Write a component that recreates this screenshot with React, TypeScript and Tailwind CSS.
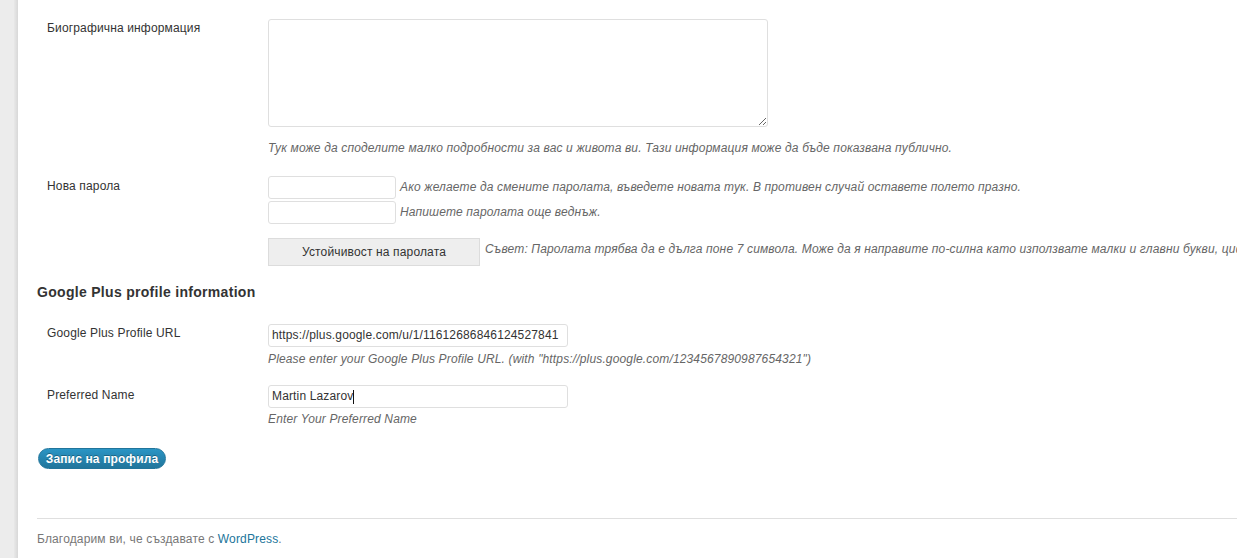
import React from "react";

const labelCls = "w-[231px] shrink-0 pl-[10px] leading-[18px] text-[#333]";
const descCls = "italic leading-[18px] text-[#666]";
const inputCls =
  "h-[23px] rounded-[3px] border border-[#dfdfdf] bg-white px-[3px] text-[12px] leading-[21px] text-[#333] outline-none";

export default function App() {
  return (
    <div className="flex h-[558px] w-[1237px] overflow-hidden bg-white font-['Liberation_Sans',Arial,sans-serif] text-[12px] tracking-[0.15px] text-[#333]">
      {/* admin menu edge */}
      <div className="flex w-[18px] shrink-0">
        <div className="w-[14px] bg-[#ececec]" />
        <div className="w-[4px] bg-linear-to-r from-[#e8e8e8] to-[#d8d8d8]" />
      </div>

      <div className="flex min-w-0 flex-1 flex-col pl-[19px]">
        {/* Bio */}
        <div className="mt-[19px] flex">
          <div className={labelCls}>Биографична информация</div>
          <div className="min-w-0">
            <textarea
              className="block h-[108px] w-[500px] rounded-[3px] border border-[#dfdfdf] bg-white outline-none"
              defaultValue=""
            />
            <p className={`mt-[12px] whitespace-nowrap ${descCls}`}>
              Тук може да споделите малко подробности за вас и живота ви. Тази информация може да бъде показвана публично.
            </p>
          </div>
        </div>

        {/* Password */}
        <div className="mt-[19px] flex">
          <div className={`${labelCls} pt-[1px]`}>Нова парола</div>
          <div className="min-w-0">
            <div className="flex items-center gap-[4px]">
              <div className={`${inputCls} w-[128px]`} />
              <span className={`-mt-[1px] whitespace-nowrap ${descCls}`}>
                Ако желаете да смените паролата, въведете новата тук. В противен случай оставете полето празно.
              </span>
            </div>
            <div className="mt-[2px] flex items-center gap-[4px]">
              <div className={`${inputCls} w-[128px]`} />
              <span className={`-mt-[1px] whitespace-nowrap ${descCls}`}>Напишете паролата още веднъж.</span>
            </div>
            <div className="mt-[14px] flex items-start">
              <div className="flex h-[28px] w-[212px] shrink-0 items-center justify-center border border-[#dcdcdc] bg-[#eeeeee] text-[12px] text-[#333]">
                Устойчивост на паролата
              </div>
              <span className={`ml-[5px] mt-[2px] whitespace-nowrap ${descCls}`}>
                Съвет: Паролата трябва да е дълга поне 7 символа. Може да я направите по-силна като използвате малки и главни букви, цифри и символи като ! " ? $ % ^ &amp; ).
              </span>
            </div>
          </div>
        </div>

        {/* Google Plus heading */}
        <h3 className="mt-[17px] text-[14px] font-bold leading-[18px] tracking-[0.3px] text-[#333]">
          Google Plus profile information
        </h3>

        <div className="mt-[23px] flex">
          <div className={labelCls}>Google Plus Profile URL</div>
          <div className="min-w-0">
            <div className={`${inputCls} w-[300px]`}>
              <div className="overflow-hidden whitespace-nowrap">
                https://plus.google.com/u/1/11612686846124527841
              </div>
            </div>
            <p className={`mt-[3px] whitespace-nowrap ${descCls}`}>
              Please enter your Google Plus Profile URL. (with "https://plus.google.com/1234567890987654321")
            </p>
          </div>
        </div>

        <div className="mt-[17px] flex">
          <div className={`${labelCls} pt-[1px]`}>Preferred Name</div>
          <div className="min-w-0">
            <div className={`${inputCls} flex w-[300px] items-center whitespace-nowrap`}>
              <span>Martin Lazarov</span>
              <span className="inline-block h-[14px] w-[1px] bg-[#111]" />
            </div>
            <p className={`mt-[2px] whitespace-nowrap ${descCls}`}>Enter Your Preferred Name</p>
          </div>
        </div>

        <div className="ml-[1px] mt-[20px] flex">
          <button className="flex h-[21px] w-[128px] items-center justify-center rounded-full border border-[#21759b] bg-linear-to-b from-[#2a95c5] to-[#21759b] text-[12px] font-bold text-white [text-shadow:0_-1px_0_rgba(0,0,0,0.3)]">
            Запис на профила
          </button>
        </div>

        <div className="mt-[49px] h-px w-full bg-[#dfdfdf]" />

        <p className="mt-[11px] leading-[18px] text-[#777]">
          Благодарим ви, че създавате с <span className="text-[#21759b]">WordPress</span>.
        </p>
      </div>
    </div>
  );
}
